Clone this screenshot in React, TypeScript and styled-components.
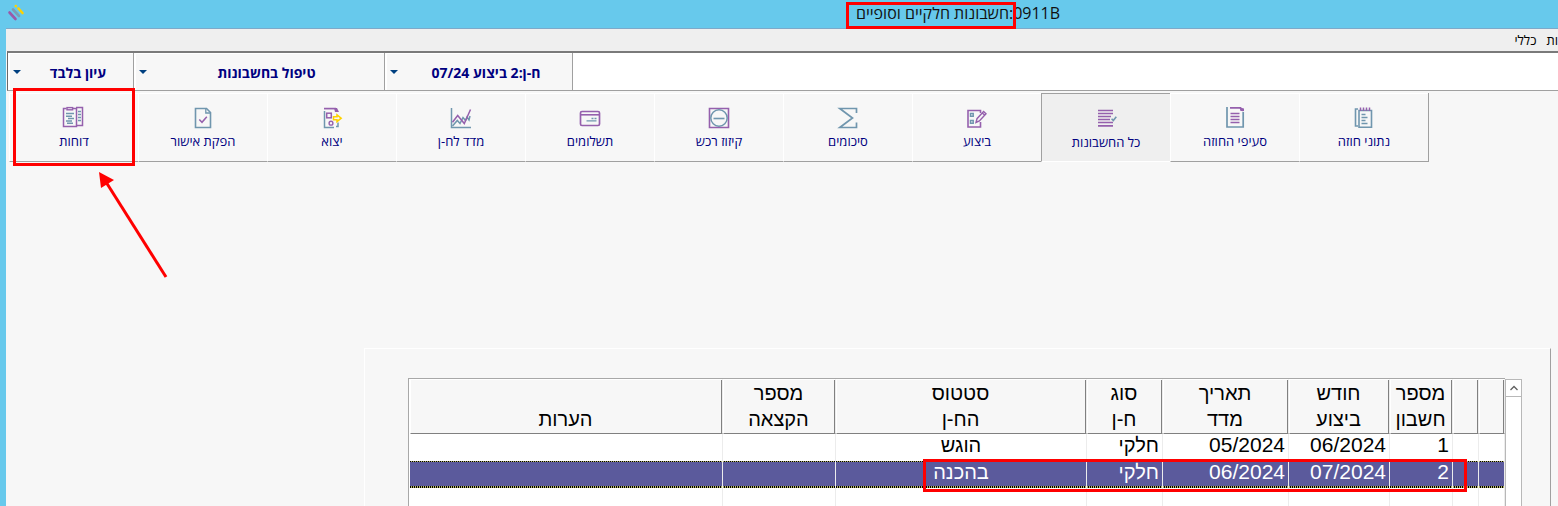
import React from "react";
import styled, { createGlobalStyle, css } from "styled-components";

const PURPLE = "#9560ad";
const BLUE = "#7096ae";
const YELLOW = "#ffd200";
const NAVY = "#000080";
const RED = "#ff0000";

const GlobalStyle = createGlobalStyle`
  *, *::before, *::after { box-sizing: border-box; }
  body { margin: 0; background: #f7f7f7; }
  button, select { font: inherit; color: inherit; margin: 0; border-radius: 0; }
`;

const Frame = styled.div`
  height: 100vh;
  overflow: hidden;
  display: flex;
  flex-direction: column;
  position: relative;
  border-left: 6px solid #67c9ec;
  background: #f7f7f7;
  font-family: "Liberation Sans", Arial, sans-serif;
  color: #000;
`;

const TitleBar = styled.header`
  flex: none;
  height: 29px;
  display: flex;
  direction: ltr;
  align-items: flex-start;
  margin-left: -6px;
  padding-left: 6px;
  background: linear-gradient(#7ea9c9, #7ea9c9) 6px bottom / 100% 1px no-repeat, #67c9ec;
`;

const Logo = styled.svg`
  flex: none;
  margin: 2px 328px 0 0;
`;

const Title = styled.h1`
  flex: 1;
  margin: 0;
  direction: rtl;
  text-align: center;
  font: 400 16px/26px "Open Sans", "Noto Sans", sans-serif;
  color: #111;
`;

const Marked = styled.span`
  position: relative;
`;

const Mark = styled.span<{ $inset: string }>`
  position: absolute;
  inset: ${(p) => p.$inset};
  border: 3px solid ${RED};
  pointer-events: none;
  z-index: 2;
`;

const MenuBar = styled.nav`
  flex: none;
  height: 22px;
  display: flex;
  gap: 10px;
  background: #efefef;
`;

const MenuItem = styled.button`
  padding: 0;
  border: 0;
  background: none;
  font-family: "Open Sans", "Noto Sans", sans-serif;
  font-size: 13px;
  line-height: 22px;
`;

const SelectorBar = styled.div`
  flex: none;
  height: 40px;
  display: flex;
  direction: ltr;
  margin-left: 1px;
  border-left: 1px solid #696969;
  border-top: 2px solid #7a7a7a;
  border-bottom: 1px solid #a0a0a0;
  background: #fff;
`;

const Picker = styled.label<{ $width: number }>`
  flex: none;
  width: ${(p) => p.$width}px;
  display: grid;
  align-items: center;
  border: solid #fff;
  border-width: 1px 0 0 2px;
  box-shadow: 1px 0 #a0a0a0;
  margin-right: 1px;
  background: #f7f7f7;
  > * { grid-area: 1 / 1; }
`;

const PickerField = styled.select`
  appearance: none;
  width: 100%;
  height: 100%;
  border: 0;
  padding: 0 0 0 13px;
  background: none;
  direction: rtl;
  text-align: center;
  text-align-last: center;
  font-family: "Open Sans", "Noto Sans", sans-serif;
  font-size: 14px;
  font-weight: 700;
  color: ${NAVY};
`;

const PickerArrow = styled.span`
  justify-self: start;
  margin-left: 3px;
  border: solid transparent;
  border-width: 4px 4px 0;
  border-top-color: #004080;
  pointer-events: none;
`;

const Toolbar = styled.div`
  flex: none;
  align-self: flex-start;
  display: flex;
  direction: rtl;
  margin: 2px 0 0 3px;
  border-right: 1px solid #a0a0a0;
`;

const Tool = styled.button<{ $active?: boolean }>`
  position: relative;
  width: 129px;
  height: 69px;
  display: flex;
  flex-direction: column;
  align-items: center;
  gap: 2px;
  padding: 12px 0 0;
  border: solid #fff;
  border-width: 1px 0 1px 1px;
  border-bottom-color: #a0a0a0;
  background: #f7f7f7;
  font-family: "Open Sans", "Noto Sans", sans-serif;
  font-size: 13px;
  line-height: 18px;
  color: ${NAVY};
  ${(p) =>
    p.$active &&
    css`
      padding-top: 13px;
      border-color: #a0a0a0;
      border-bottom-color: #fff;
      background: #efefef;
    `}
`;

const Pointer = styled.svg`
  position: absolute;
  left: 84px;
  top: 165px;
`;

const Panel = styled.main`
  flex: 1;
  min-height: 0;
  display: flex;
  direction: ltr;
  margin: 186px 7px 0 358px;
  padding: 29px 28px 0 43px;
  border: solid #fff;
  border-width: 1px 1px 0 1px;
  border-right-color: #a0a0a0;
`;

const TableArea = styled.div`
  position: relative;
  flex: 1;
  border: solid #a8a8a8;
  border-width: 1px 0 0 1px;
  padding-left: 1px;
  background: #fff;
`;

const Table = styled.table`
  width: 100%;
  table-layout: fixed;
  border-collapse: separate;
  border-spacing: 0;
  font-size: 20px;
  line-height: 26px;
`;

const Head = styled.th`
  height: 54px;
  padding: 0 2px 1px 0;
  vertical-align: bottom;
  font-weight: 400;
  text-align: center;
  background: #f7f7f7;
  border: solid #fff;
  border-width: 1px;
  border-right-color: #ececec;
  border-bottom-color: #808080;
  box-shadow: inset -1px 0 #808080;
`;

const Row = styled.tr<{ $selected?: boolean }>`
  ${(p) =>
    p.$selected &&
    css`
      color: #fff;
      background:
        repeating-linear-gradient(90deg, #000 0 1px, #b5b56a 1px 2px) top / 100% 1px no-repeat,
        repeating-linear-gradient(90deg, #000 0 1px, #b5b56a 1px 2px) bottom / 100% 2px no-repeat,
        #5b5a9c;
    `}
`;

const Cell = styled.td<{ $align?: string; $numeric?: boolean }>`
  height: 27px;
  padding: 0 3px 5px;
  font-size: ${(p) => (p.$numeric ? 21 : 20)}px;
  line-height: 22px;
  text-align: ${(p) => p.$align ?? "right"};
  border-right: 1px solid #ececec;
`;

const SelectionMark = styled(Mark)`
  width: 544px;
  height: 33px;
`;

const ScrollBar = styled.div`
  flex: none;
  width: 17px;
  border: solid #b8b8b8;
  border-width: 1px 1px 0 1px;
  margin-top: 1px;
  background: #fff;
`;

const ScrollUp = styled.button`
  width: 100%;
  height: 17px;
  display: grid;
  place-items: center;
  padding: 0;
  border: 0;
  border-bottom: 1px solid #b8b8b8;
  background: #fff;
`;

const line = (stroke: string, width = 1.5) => ({ stroke, strokeWidth: width, fill: "none" });

const glyphs = {
  contract: (
    <>
      <path d="M6 3H3.5V20H6" {...line(BLUE, 1.6)} />
      <path d="M7 4.5H19.5V21.2H7Z" {...line(BLUE, 1.6)} />
      <path d="M8.5 1.5V5M11.5 1.5V5M14.5 1.5V5M17.5 1.5V5" {...line(PURPLE, 1.5)} />
      <path d="M9.5 8.5H13.5M9.5 11.5H15.5M9.5 14.5H13.5M9.5 17.5H15.5" {...line(BLUE)} />
    </>
  ),
  clauses: (
    <>
      <path d="M4 1V21H20.2V6" {...line(BLUE, 1.7)} />
      <path d="M7 1.8H17.5L20.5 5" {...line(PURPLE, 1.7)} />
      <path d="M16.5 1.5L21 2.5V5H17.5Z" fill={PURPLE} />
      <path d="M7.5 7.5H16.5M7.5 10.5H16.5M7.5 13.5H16.5M7.5 16.5H16.5" {...line(PURPLE)} />
    </>
  ),
  all: (
    <>
      <path d="M4 3.5H19M4 6.5H19M4 9.5H17M4 12.5H16M4 15.5H19M4 18.8H19" {...line(PURPLE, 1.7)} />
      <path d="M17.6 11.8L19.3 13.5L22.3 9.7" {...line(BLUE, 1.6)} />
    </>
  ),
  execute: (
    <>
      <path d="M15.5 7V4.5H3V21H15.5V16" {...line(PURPLE, 1.6)} />
      <path d="M5.5 7.5H8.2V10.2H5.5ZM5.5 14.5H8.2V17.2H5.5Z" {...line(BLUE, 1.5)} />
      <path d="M11 16.5L12 12.7L18.6 5.6L21 7.8L14.4 15L11 16.5ZM17.3 7L19.8 9.2" {...line(PURPLE, 1.4)} />
    </>
  ),
  sum: <path d="M20.5 7V2.5H3.8L16.5 12L3.8 21.5H20.5V16.5" {...line(BLUE, 1.7)} />,
  offset: (
    <>
      <path d="M2.5 2.5H21.5V21.5H2.5Z" {...line(PURPLE, 1.6)} />
      <circle cx="12" cy="12" r="8.2" {...line(BLUE, 1.5)} />
      <path d="M6.5 12.5H17.5" {...line(BLUE, 1.6)} />
    </>
  ),
  payments: (
    <>
      <rect x="2.5" y="5.5" width="19" height="14" rx="1.5" {...line(PURPLE, 1.7)} />
      <path d="M3 8.8H21" {...line(PURPLE, 1.6)} />
      <path d="M13.5 12.5H15.5M16.5 12.5H18.5M8.5 14.8H18.5" {...line(BLUE, 1.3)} />
    </>
  ),
  index: (
    <>
      <path d="M2.5 2V21.5H22" {...line(BLUE, 1.5)} />
      <path d="M3.5 20L8.3 14.5L11 17.5L14 11.5L16.5 14.5L18 11L20 14L21 10" {...line(BLUE, 1.5)} />
      <path d="M3.5 16.3L8.7 9.5L15.3 17.5L21.5 3.5" {...line(PURPLE, 1.5)} />
    </>
  ),
  exportOut: (
    <>
      <path d="M4.5 5V21.5H14M18 16.5V20.5H16" {...line(BLUE, 1.5)} />
      <path d="M4 2.6H16" {...line(PURPLE, 1.7)} />
      <path d="M14 2H17L19 6H15Z" fill={PURPLE} />
      <rect x="6.7" y="7.2" width="4.6" height="4.6" {...line(PURPLE, 1.5)} />
      <circle cx="11" cy="17.2" r="1.9" {...line(PURPLE, 1.4)} />
      <path d="M13.5 10.7H17V8.8L21.2 12.2L17 15.6V13.7H13.5Z" {...line(YELLOW, 1.5)} />
    </>
  ),
  approve: (
    <>
      <path d="M4.5 2.5H15.5L19.5 6.5V21.5H4.5Z" {...line(BLUE, 1.6)} />
      <path d="M14.8 2.7V7H19.3" {...line(BLUE, 1.3)} />
      <path d="M8.3 13.5L11 16.3L15.8 10.8" {...line(PURPLE, 1.5)} />
    </>
  ),
  reports: (
    <>
      <path d="M4.5 2.5H1.5V20.5H14.5V2.5H11" {...line(PURPLE, 1.5)} />
      <rect x="5" y="1.6" width="5.6" height="2.2" {...line(PURPLE, 1.4)} />
      <path d="M14 1.5H20.5V19.5H15" {...line(PURPLE, 1.5)} />
      <path d="M4 7.5H12M4 10.2H10M6 12.5H12M4 15H10M5 17.2H11" {...line(BLUE, 1.6)} />
      <path d="M16 5.5H19M16 8.5H19M16 11.5H19M16 14.5H19" {...line(BLUE, 1.5)} />
    </>
  ),
};

type GlyphName = keyof typeof glyphs;

const Glyph = ({ name }: { name: GlyphName }) => (
  <svg width="24" height="24" viewBox="0 0 24 24" aria-hidden="true">
    {glyphs[name]}
  </svg>
);

const tools: { label: string; icon: GlyphName; active?: boolean; marked?: boolean }[] = [
  { label: "נתוני חוזה", icon: "contract" },
  { label: "סעיפי החוזה", icon: "clauses" },
  { label: "כל החשבונות", icon: "all", active: true },
  { label: "ביצוע", icon: "execute" },
  { label: "סיכומים", icon: "sum" },
  { label: "קיזוז רכש", icon: "offset" },
  { label: "תשלומים", icon: "payments" },
  { label: "מדד לח-ן", icon: "index" },
  { label: "יצוא", icon: "exportOut" },
  { label: "הפקת אישור", icon: "approve" },
  { label: "דוחות", icon: "reports", marked: true },
];

const pickers = [
  { name: "הרשאה", value: "עיון בלבד", width: 125 },
  { name: "פעולה", value: "טיפול בחשבונות", width: 250 },
  { name: "חשבון", value: "ח-ן:2 ביצוע 07/24", width: 187 },
];

const columns: { head: string[]; width?: number; align?: string; numeric?: boolean }[] = [
  { head: [], width: 26 },
  { head: [], width: 26 },
  { head: ["מספר", "חשבון"], width: 63, numeric: true },
  { head: ["חודש", "ביצוע"], width: 101, numeric: true },
  { head: ["תאריך", "מדד"], width: 126, numeric: true },
  { head: ["סוג", "ח-ן"], width: 76 },
  { head: ["סטטוס", "הח-ן"], width: 251, align: "center" },
  { head: ["מספר", "הקצאה"], width: 113 },
  { head: ["הערות"] },
];

const rows = [
  ["", "", "1", "06/2024", "05/2024", "חלקי", "הוגש", "", ""],
  ["", "", "2", "07/2024", "06/2024", "חלקי", "בהכנה", "", ""],
  ["", "", "", "", "", "", "", "", ""],
];

export default function App() {
  return (
    <Frame>
      <GlobalStyle />
      <TitleBar>
        <Logo width="24" height="24" viewBox="0 0 24 24" aria-hidden="true">
          <g strokeWidth="2.6" strokeLinecap="round">
            <path d="M3.5 10.5L9.5 17" stroke="#9a5aa8" />
            <path d="M7 7.5L13 14" stroke="#7c9db5" />
            <path d="M12.5 6.5L16.5 11" stroke={YELLOW} />
            <path d="M9.8 4V4.1" stroke={YELLOW} />
          </g>
        </Logo>
        <Title>
          0911B
          <Marked>
            :חשבונות חלקיים וסופיים
            <Mark $inset="0 -3px -5px -10px" />
          </Marked>
        </Title>
      </TitleBar>

      <MenuBar dir="rtl">
        <MenuItem>ות</MenuItem>
        <MenuItem>כללי</MenuItem>
      </MenuBar>

      <SelectorBar>
        {pickers.map((p) => (
          <Picker key={p.name} $width={p.width}>
            <PickerField aria-label={p.name}>
              <option>{p.value}</option>
            </PickerField>
            <PickerArrow />
          </Picker>
        ))}
      </SelectorBar>

      <Toolbar role="toolbar">
        {tools.map((t) => (
          <Tool key={t.label} $active={t.active} aria-pressed={!!t.active}>
            <Glyph name={t.icon} />
            {t.label}
            {t.marked && <Mark $inset="-6px 3px -5px 3px" />}
          </Tool>
        ))}
      </Toolbar>

      <Pointer width="90" height="120" viewBox="0 0 90 120" aria-hidden="true">
        <path d="M76 112L16 17" stroke={RED} strokeWidth="3" />
        <path d="M9 7L24 15L11 23Z" fill={RED} />
      </Pointer>

      <Panel>
        <TableArea>
          <Table dir="rtl">
            <colgroup>
              {columns.map((c, i) => (
                <col key={i} width={c.width} />
              ))}
            </colgroup>
            <thead>
              <tr>
                {columns.map((c, i) => (
                  <Head key={i} scope="col">
                    {c.head.map((part, n) => (
                      <React.Fragment key={part}>
                        {n > 0 && <br />}
                        {part}
                      </React.Fragment>
                    ))}
                  </Head>
                ))}
              </tr>
            </thead>
            <tbody>
              {rows.map((row, r) => (
                <Row key={r} $selected={r === 1}>
                  {row.map((value, c) => (
                    <Cell key={c} $align={columns[c].align} $numeric={columns[c].numeric}>
                      {value}
                    </Cell>
                  ))}
                </Row>
              ))}
            </tbody>
          </Table>
          <SelectionMark $inset="80px 38px auto auto" />
        </TableArea>
        <ScrollBar>
          <ScrollUp aria-label="גלילה למעלה">
            <svg width="8" height="6" viewBox="0 0 8 6" aria-hidden="true">
              <path d="M0.5 5L4 1.5L7.5 5" fill="none" stroke="#606060" strokeWidth="1.3" />
            </svg>
          </ScrollUp>
        </ScrollBar>
      </Panel>
    </Frame>
  );
}
